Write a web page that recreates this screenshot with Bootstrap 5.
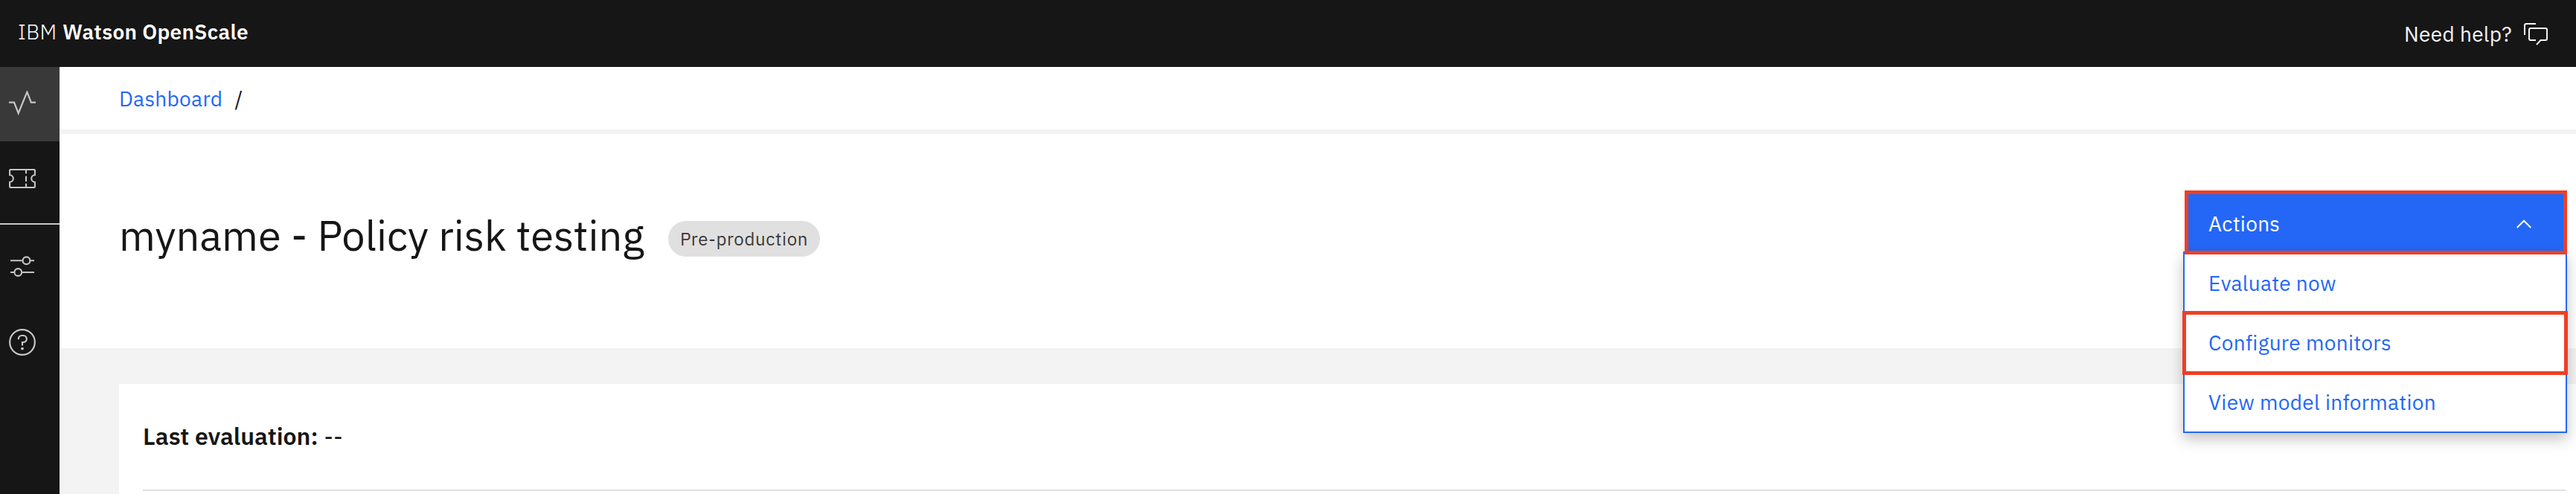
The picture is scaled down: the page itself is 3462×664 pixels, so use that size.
<!DOCTYPE html>
<html lang="en">
<head>
<meta charset="utf-8">
<title>IBM Watson OpenScale</title>
<link href="https://cdn.jsdelivr.net/npm/bootstrap@5.3.0/dist/css/bootstrap.min.css" rel="stylesheet">
<style>
body{font-family:"IBM Plex Sans",Roboto,"Liberation Sans",sans-serif;font-size:28px;line-height:40px;letter-spacing:.32px;color:#161616;background:#fff;height:664px;overflow:hidden}
.topbar{height:90px;background:#161616;padding:0 38px 0 24px}
.topbar .brand{color:#fff;padding-bottom:4px}
.brand-ibm{font-weight:300}
.brand-name{font-weight:600;margin-left:8px}
.help{color:#f4f4f4;padding-top:2px;gap:16px}
.side{width:80px;height:574px;background:#161616;color:#c6c6c6}
.side a{height:100px;width:80px;padding-left:12px;color:inherit}
.side a.active{background:#393939}
.side hr{margin:10px 0 6px;border:0;height:2px;background:#c6c6c6;opacity:1}
.side .side-help{margin-top:2px}
.crumbs{height:90px;padding:4px 0 0 80px;border-bottom:6px solid #f3f3f3;line-height:78px}
.crumbs a,.menu a{color:#2467f6;text-decoration:none}
.hero{height:288px;padding:0 12px 0 80px}
.hero h1{font-size:56px;font-weight:400;line-height:70px;letter-spacing:0;margin:101px 0 0}
.env{height:48px;line-height:49px;border-radius:24px;background:#e0e0e0;color:#393939;font-size:24px;letter-spacing:.64px;padding:0 16px;margin:117px 0 0 32px}
.actions{width:516px;height:80px;margin-top:78px}
.toggle{width:514px;height:80px;margin-left:2px;border:0;background:#2467f6;color:#fff;padding:6px 48px 0 32px;letter-spacing:inherit}
.menu{top:80px;left:0;width:516px;height:244px;border:2px solid #2467f6;background:#fff;padding-top:1px;box-shadow:0 8px 18px rgba(0,0,0,.24);z-index:2}
.menu a{height:80px;line-height:80px;padding-left:32px}
.frame{border:5px solid #ee3f26;z-index:3;pointer-events:none}
.frame-a{left:2px;top:-2px;width:514px;height:86px}
.frame-b{left:-1px;top:160px;width:518px;height:86px}
.lower{background:#f3f3f3;padding:48px 0 0 80px}
.panel{background:#fff;height:148px;padding:50px 14px 0 32px;font-size:32px;letter-spacing:0}
.panel .rule{height:2px;background:#e0e0e0;margin-top:52px}
.panel b{font-weight:600}
svg{display:block;fill:none;stroke:currentColor}
</style>
</head>
<body>
<header class="topbar d-flex justify-content-between align-items-center">
  <div class="brand d-flex"><span class="brand-ibm">IBM</span><span class="brand-name">Watson OpenScale</span></div>
  <div class="help d-flex align-items-center"><span>Need help?</span>
    <svg width="32" height="30" viewBox="0 0 32 30" stroke-width="2"><path d="M1 16V3q0-2 2-2h13M16 23h-7q-2 0-2-2V9q0-2 2-2h20q2 0 2 2v12q0 2-2 2h-6.500L17 29"/></svg>
  </div>
</header>
<div class="d-flex">
  <nav class="side flex-shrink-0">
    <a class="active d-flex align-items-center" href="#"><svg width="36" height="36" viewBox="12 122 36 36" stroke-width="2.200"><path d="M12 137.700h7l5.700 14.500 11.700-28.500 5.400 14h6.200"/></svg></a>
    <a class="d-flex align-items-center" href="#"><svg width="36" height="36" viewBox="12 222 36 36" stroke-width="2.100"><path d="M13.100 229q0-1 1-1h31.800q1 0 1 1v6.300a4.700 4.700 0 0 0 0 9.400v6.300q0 1-1 1H14.100q-1 0-1-1v-6.300a4.700 4.700 0 0 0 0-9.400zM35 228v5.300M35 236.700v7.300M35 246.700v5.300"/></svg></a>
    <hr>
    <a class="d-flex align-items-center" href="#"><svg width="36" height="36" viewBox="12 340 36 36" stroke-width="2.100"><path d="M14 350.300h16.500M40.500 350.300H46M14 366h5.300M29.300 366H46"/><circle cx="35.500" cy="350.300" r="4.900"/><circle cx="24.300" cy="366" r="4.900"/></svg></a>
    <a class="side-help d-flex align-items-center" href="#"><svg width="36" height="36" viewBox="2 2 28 28"><circle cx="16" cy="16" r="13.100" stroke-width="1.700"/><path d="M12 13v-.5A3.500 3.500 0 0 1 15.500 9H17a3.500 3.500 0 0 1 0 7h-1v3.500" stroke-width="1.700"/><circle cx="16" cy="22.700" r="1.500" fill="currentColor" stroke="none"/></svg></a>
  </nav>
  <main class="flex-grow-1">
    <div class="crumbs d-flex"><a href="#">Dashboard</a><span class="ms-3">/</span></div>
    <section class="hero d-flex align-items-start">
      <h1>myname - Policy risk testing</h1>
      <span class="env">Pre-production</span>
      <div class="actions position-relative ms-auto">
        <button class="toggle d-flex align-items-center justify-content-between" type="button"><span>Actions</span>
          <svg width="20" height="12" viewBox="0 1 20 12" stroke-width="2"><path d="M.7 12 10 2.700 19.300 12"/></svg></button>
        <div class="menu position-absolute"><a class="d-block" href="#">Evaluate now</a><a class="d-block" href="#">Configure monitors</a><a class="d-block" href="#">View model information</a></div>
        <div class="frame frame-a position-absolute"></div>
        <div class="frame frame-b position-absolute"></div>
      </div>
    </section>
    <section class="lower"><div class="panel"><div><b>Last evaluation:</b> <span>--</span></div><div class="rule"></div></div></section>
  </main>
</div>
<script src="https://cdn.jsdelivr.net/npm/bootstrap@5.3.0/dist/js/bootstrap.bundle.min.js"></script>
</body>
</html>
